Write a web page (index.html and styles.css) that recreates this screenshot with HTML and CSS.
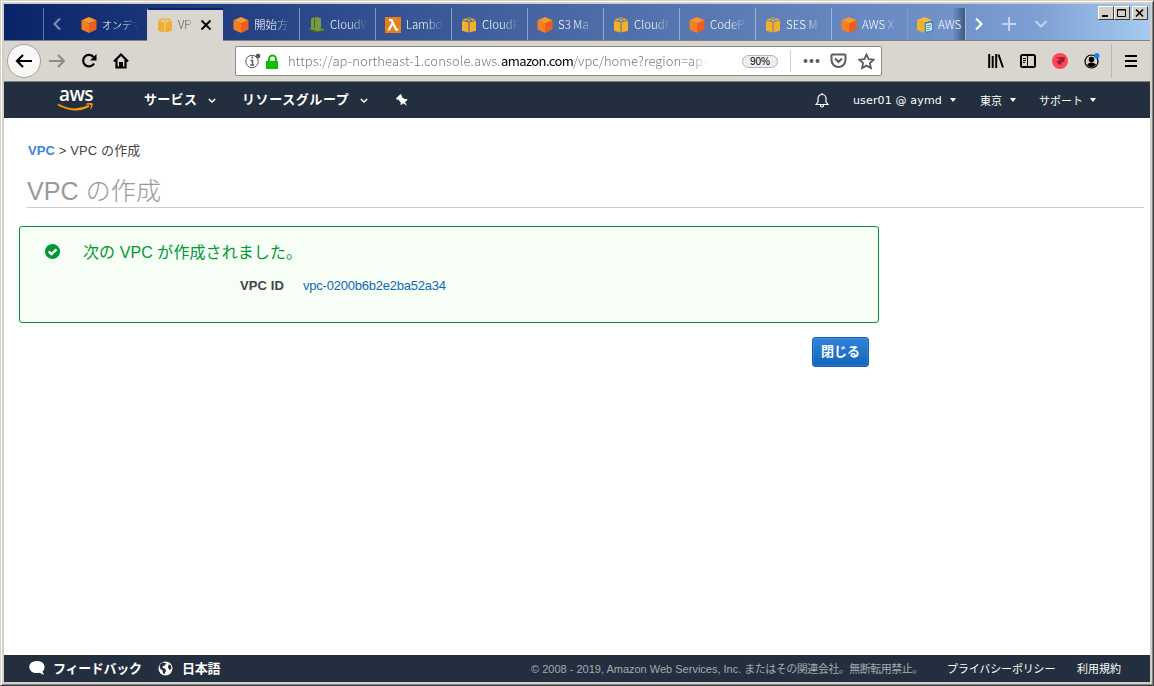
FILE: index.html
```html
<!doctype html>
<html lang="ja">
  <head>
    <meta charset="utf-8">
    <title>VPC の作成</title>
    <link rel="stylesheet" href="styles.css">
  </head>
  <body>
    <svg class="defs" width="0" height="0">
      <symbol id="cube" viewBox="0 0 16 16">
        <path fill="#f9962a" d="M8 0l7.5 3.2L8 6.5.5 3.2z"/>
        <path fill="#f57f23" d="M.5 3.2L8 6.5V16L.5 12.6z"/>
        <path fill="#ee5e1f" d="M15.5 3.2L8 6.5V16l7.5-3.4z"/>
      </symbol>
      <symbol id="box" viewBox="0 0 16 16">
        <path fill="#f0b02d" d="M1 3.8l6.5 1.4v10.3L1 13.7zM15 3.8L8.5 5.2v10.3l6.5-1.8zM1 3L4.2 1.4l3 .2L5 3.8zM15 3l-3.2-1.6-3 .2L11 3.8zM5.7 1.1L8 .5l2.3.6L8 1.5zM6 4L8 2l2 2-2 .6z"/>
      </symbol>
    </svg>
    <div class="window">
      <div class="tabs">
        <div class="tabs-start"></div>
        <div class="scroll-left"><svg width="10" height="14" viewBox="0 0 10 14"><path d="M8 1.5L2.500 7 8 12.500"/></svg></div>
        <div class="tab first"><svg class="fav"><use href="#cube"/></svg><span>オンデマ</span></div>
        <div class="tab active"><svg class="fav"><use href="#box"/></svg><span>VP</span><svg class="close" width="12" height="12" viewBox="0 0 12 12"><path d="M1.500 1.500l9 9m0-9l-9 9"/></svg></div>
        <div class="tab"><svg class="fav"><use href="#cube"/></svg><span>開始方</span></div>
        <div class="tab"><svg class="fav" viewBox="0 0 16 16"><path fill="#759c3e" d="M2 2l3-2v10l-3 2zM5 1l2-1 5 1v10H5zM0 11.500l5-1.500 11 2.500L8 15z"/><path fill="#4b612c" d="M5 2.500L6 1v9l-1 1.500zM0 11.500L8 14v2l-8-3zM8 14.500l8-2v1.200L8 16z"/></svg><span>CloudW</span></div>
        <div class="tab"><svg class="fav" viewBox="0 0 16 16"><path fill="#e8801a" d="M0 0h16v16H0z"/><path fill="none" stroke="#fff" stroke-width="2.200" d="M4 3.200h2.600l4.600 9.500h2M7.500 6.500L3.500 13.500"/></svg><span>Lambd</span></div>
        <div class="tab"><svg class="fav"><use href="#box"/></svg><span>CloudF</span></div>
        <div class="tab"><svg class="fav"><use href="#cube"/></svg><span>S3 Ma</span></div>
        <div class="tab"><svg class="fav"><use href="#box"/></svg><span>CloudF</span></div>
        <div class="tab"><svg class="fav"><use href="#cube"/></svg><span>CodeP</span></div>
        <div class="tab"><svg class="fav"><use href="#box"/></svg><span>SES M</span></div>
        <div class="tab"><svg class="fav"><use href="#cube"/></svg><span>AWS X</span></div>
        <div class="tab last"><svg class="fav" viewBox="0 0 16 16"><path fill="#f3b940" d="M0 3l7-3 8 3-7 3z"/><path fill="#f0b02d" d="M0 3l8 3v10l-8-3z"/><path fill="#d68a20" d="M8 6l7-3v10l-7 3z"/><path fill="#f4fbff" stroke="#2e86c0" stroke-width="1.400" d="M8.500 6l7-1v9l-7 1.500z"/><path stroke="#2e86c0" d="M10 8.500l4-.6M10 10.500l4-.6M10 12.600l3-.4"/></svg><span>AWS</span></div>
        <div class="tab-tools">
          <svg width="10" height="14" viewBox="0 0 10 14"><path class="bright" d="M2 1.500L7.500 7 2 12.500"/></svg>
          <svg width="16" height="16" viewBox="0 0 16 16"><path d="M8 1v14M1 8h14"/></svg>
          <svg width="14" height="10" viewBox="0 0 14 10"><path d="M1.500 2L7 7.500 12.500 2"/></svg>
        </div>
        <div class="win-buttons">
          <i><svg width="12" height="10"><path d="M2 8h6"/></svg></i>
          <i><svg width="12" height="10"><path class="thin" d="M1.500 1.500h8v7h-8zM1.500 2h8"/></svg></i>
          <i><svg width="12" height="10"><path class="cross" d="M2 1.500l7 7m0-7l-7 7"/></svg></i>
        </div>
      </div>

      <div class="toolbar">
        <div class="back"><svg width="18" height="16" viewBox="0 0 18 16"><path d="M17 8H2M8 2L2 8l6 6"/></svg></div>
        <svg class="forward" width="16" height="16" viewBox="0 0 16 16"><path d="M0 8h14M9 2l6 6-6 6"/></svg>
        <svg class="reload" width="16" height="16" viewBox="0 0 16 16"><path d="M13 10.500A5.800 5.800 0 1 1 12.500 4"/><path class="solid" d="M15.500 1v6.500H9z"/></svg>
        <svg class="home" width="16" height="16" viewBox="0 0 16 16"><path d="M1 8.500L8 1.500l7 7M3.500 7v7.500h9V7"/><path class="solid" d="M6 9h4v6H6z"/></svg>
        <div class="urlbar">
          <svg class="info" width="16" height="16" viewBox="0 0 16 16"><circle cx="7" cy="8.500" r="6.200"/><path d="M5.500 7.500h2v4M5.200 12h4" stroke-width="1.400"/><path d="M6.500 4.500h1.500" stroke-width="2"/><circle cx="13" cy="3" r="2" fill="#555"/></svg>
          <svg class="lock" width="13" height="15" viewBox="0 0 13 15"><path fill="#12bc00" d="M0 7h2V5a4.500 4.500 0 0 1 9 0v2h1v8H0zM4 7h5V5a2.500 2.500 0 0 0-5 0z"/></svg>
          <div class="url"><span class="sub">https://ap-northeast-1.console.aws.</span><b>amazon.com</b><span class="path">/vpc/home?region=ap-</span></div>
          <div class="zoom">90%</div>
          <svg class="dots" width="17" height="6" viewBox="0 0 17 6"><circle cx="2.500" cy="3" r="2"/><circle cx="8.500" cy="3" r="2"/><circle cx="14.500" cy="3" r="2"/></svg>
          <svg class="pocket" width="17" height="16" viewBox="0 0 17 16"><path d="M2.500 1.500h12a1 1 0 0 1 1 1v4.500a7 7 0 0 1-14 0V2.500a1 1 0 0 1 1-1zM5 5.500L8.500 9 12 5.500"/></svg>
          <svg class="star" width="17" height="17" viewBox="0 0 17 17"><path d="M8.500 1.500l2.100 4.600 5 .6-3.700 3.400 1 5-4.400-2.500-4.400 2.500 1-5L1.400 6.700l5-.6z"/></svg>
        </div>
        <div class="tools">
          <svg width="16" height="16" viewBox="0 0 16 16"><path d="M1.200 1v14M4.700 3v12M8.200 1v14M10.500 1.500l4.500 13"/></svg>
          <svg width="16" height="16" viewBox="0 0 16 16"><rect x="1" y="2" width="14" height="12" rx="1.500"/><path class="thin" d="M7.500 2v12M3 5.500h3M3 7.500h3M3 9.500h2"/></svg>
          <svg width="16" height="16" viewBox="0 0 16 16"><circle class="red" cx="8" cy="8" r="8"/><path fill="#a11b32" stroke="none" d="M3.500 4.500L13 4l-1 5.500-1.500-1L8 13l-.8-2-2 .8.800-2-2-.8L8 6.500z"/></svg>
          <svg width="16" height="16" viewBox="0 0 16 16"><circle cx="7.500" cy="8.500" r="6.500" stroke-width="1.200"/><circle cx="7.500" cy="6.500" r="2.800" fill="#000" stroke="none"/><path fill="#000" stroke="none" d="M3 12Q4 9.500 7.500 9.500T12 12q-4.500 4.500-9 0z"/><circle class="blue" cx="12.800" cy="2.800" r="2.700"/></svg>
          <svg class="menu" width="15" height="16" viewBox="0 0 15 16"><path d="M1 3h12M1 8h12M1 13h12"/></svg>
        </div>
      </div>

      <header class="nav">
        <div class="logo">aws<svg width="37" height="9" viewBox="0 0 37 9"><path fill="none" stroke="#f90" stroke-width="2" d="M1 1.500q16 9 31 1.500"/><path fill="#f90" d="M29 .8q4-1.500 6.800-.3Q36 4 33 7.500 34 4 34 2q-2-.7-5-.3z"/></svg></div>
        <span class="service">サービス</span>
        <svg class="chev" width="8" height="6" viewBox="0 0 8 6"><path d="M.8 1L4 4l3.200-3"/></svg>
        <span class="groups">リソースグループ</span>
        <svg class="chev" width="8" height="6" viewBox="0 0 8 6"><path d="M.8 1L4 4l3.200-3"/></svg>
        <svg class="pin" width="12" height="12" viewBox="0 0 12 12"><path fill="#fff" d="M4.500 0L6 2l-.2 1L9 5.200l1.700-.4.8 1L9 8.200l2 3.500-4-2.500L5.500 11l-1-.5.300-1.800L2.500 5.800H1L0 4.500z"/></svg>
        <div class="account">
          <svg width="14" height="15" viewBox="0 0 14 15"><path fill="none" stroke="#fff" stroke-width="1.200" d="M1 11.500L3 9V5.500a4 4 0 0 1 8 0V9l2 2.500zM7 0v2M5.500 12q0 2 1.500 2t1.500-2"/></svg>
          <span class="user">user01 @ aymd</span><i></i>
          <span class="region">東京</span><i></i>
          <span class="support">サポート</span><i></i>
        </div>
      </header>

      <main>
        <p class="crumb"><a href="#">VPC</a> &gt; VPC の作成</p>
        <h1>VPC の作成</h1>
        <section class="success">
          <svg width="15" height="15" viewBox="0 0 15 15"><circle cx="7.500" cy="7.500" r="7.500" fill="#093"/><path fill="none" stroke="#fff" stroke-width="2.400" d="M3.700 7.300l2.800 2.800 5-4.800"/></svg>
          <div class="message">
            <h2>次の VPC が作成されました。</h2>
            <div class="field"><b>VPC ID</b><a href="#">vpc-0200b6b2e2ba52a34</a></div>
          </div>
        </section>
        <div class="actions"><button>閉じる</button></div>
      </main>

      <footer>
        <svg width="16" height="15" viewBox="0 0 16 15"><path fill="#fff" d="M8 0c4.500 0 7.500 2.300 7.500 6 0 2-.8 3.500-2 4.500L15 14l-4.500-2.200C5 13 .3 10.500.3 6 .3 2.300 3.500 0 8 0z"/></svg>
        <span class="feedback">フィードバック</span>
        <svg width="15" height="15" viewBox="0 0 15 15"><circle cx="7.500" cy="7.500" r="7" fill="#fff"/><path fill="#232f3e" d="M1.500 4l3-2.500L8 2 7 4.500l-2 .5-.5 2 2.500.5 1 2L6.500 13 5 12.500 4.500 9.500 2 7.500zM10.500 3.500l2.500 1 .5 3-2 1.500-1.500-2.500z"/></svg>
        <span class="lang">日本語</span>
        <span class="copy">© 2008 - 2019, Amazon Web Services, Inc. <span>またはその関連会社。無断転用禁止。</span></span>
        <span class="privacy">プライバシーポリシー</span>
        <span class="terms">利用規約</span>
      </footer>
    </div>
  </body>
</html>
```
FILE: styles.css
```css
* {
  box-sizing: border-box;
}

body {
  margin: 0;
  font-family: "Liberation Sans", "Noto Sans CJK JP", sans-serif;
  font-size: 13px;
  color: #444;
}

svg {
  display: block;
  flex: none;
}

.defs {
  position: absolute;
}

.window {
  display: flex;
  flex-direction: column;
  width: 1154px;
  height: 686px;
  border: 1px solid;
  border-color: #d4d0c8 #404040 #404040 #d4d0c8;
  box-shadow: inset 1px 1px #fff, inset -1px -1px #808080;
  padding: 3px;
  background: #d4d0c8;
  overflow: hidden;
}

/* tab strip */
.tabs {
  position: relative;
  display: flex;
  height: 37px;
  padding-top: 4px;
  border-bottom: 1px solid #808080;
  background: linear-gradient(90deg, #0a246a, #2d4b8b 28%, #5272ad 56%, #6d8fc6 80%, #7d9fd3 90%, #a6caf0);
}

.tabs-start {
  width: 40px;
  border-right: 1px solid #5f73a3;
}

.scroll-left {
  width: 27px;
  padding: 9px 0 0 8px;
}

.scroll-left path,
.tab-tools path {
  fill: none;
  stroke: #8592b4;
  stroke-width: 2;
}

.tab {
  display: flex;
  flex: none;
  width: 76px;
  padding: 9px 0 0 9px;
  border-left: 1px solid rgba(255, 255, 255, .4);
  color: #fff;
  font-size: 12px;
  line-height: 15px;
}

.tab.first,
.tab.active + .tab {
  border-left-color: transparent;
}

.tab span {
  width: 40px;
  margin-left: 5px;
  white-space: nowrap;
  font-family: "Noto Sans CJK JP", sans-serif;
  font-size: 11.5px;
  font-weight: 300;
  -webkit-mask-image: linear-gradient(90deg, #000 50%, transparent 92%);
  mask-image: linear-gradient(90deg, #000 50%, transparent 92%);
}

.tab.first span {
  font-size: 10px;
}

.fav {
  width: 16px;
  height: 16px;
}

.tab.active {
  height: 33px;
  padding: 7px 0 0 9px;
  border-top: 2px solid #0a246a;
  border-left-color: #d4d0c8;
  background: #d9d6cf;
  color: #555;
}

.tab.active span {
  width: 17px;
}

.close {
  margin: 2px 0 0 5px;
  stroke: #000;
  stroke-width: 2;
}

.tab.last {
  width: 58px;
  background: linear-gradient(90deg, transparent 78%, #3f5680);
}

.tab.last span {
  width: 27px;
  -webkit-mask-image: none;
  mask-image: none;
}

.tab-tools {
  display: flex;
  align-items: center;
  gap: 17px;
  padding-left: 8px;
  border-left: 1px solid #a9bddf;
}

.tab-tools path {
  stroke: #c5d1e8;
}

.tab-tools .bright {
  stroke: #fff;
}

.win-buttons {
  position: absolute;
  top: 2px;
  right: 2px;
  display: flex;
}

.win-buttons i {
  width: 16px;
  height: 14px;
  padding: 1px;
  border: 1px solid;
  border-color: #fff #404040 #404040 #fff;
  background: #d4d0c8;
}

.win-buttons i:last-child {
  margin-left: 2px;
}

.win-buttons path {
  fill: none;
  stroke: #000;
  stroke-width: 2;
}

.win-buttons .thin {
  stroke-width: 1;
}

.win-buttons .cross {
  stroke-width: 1.6;
}

/* navigation toolbar */
.toolbar {
  display: flex;
  align-items: center;
  height: 41px;
  border-bottom: 1px solid #808080;
  background: #d9d6cf;
}

.toolbar > svg path,
.back path {
  fill: none;
  stroke: #000;
  stroke-width: 2.2;
}

.back {
  width: 34px;
  height: 34px;
  margin-left: 3px;
  padding: 8px 0 0 7px;
  border: 1px solid #a5a39e;
  border-radius: 50%;
  background: #f8f8f6;
}

.toolbar .forward {
  margin-left: 8px;
}

.toolbar .forward path {
  stroke: #8c8a86;
}

.reload,
.home {
  margin-left: 16px;
}

.toolbar .solid {
  fill: #000;
  stroke: none;
}

.urlbar {
  display: flex;
  align-items: center;
  width: 647px;
  height: 30px;
  margin-left: 106px;
  padding-left: 9px;
  border: 1px solid #8a8a88;
  border-radius: 2px;
  background: #fff;
}

.info,
.pocket,
.star {
  fill: none;
  stroke: #5c5c5c;
  stroke-width: 2;
}

.info {
  stroke-width: 1;
}

.lock {
  margin-left: 5px;
}

.url {
  display: flex;
  width: 420px;
  margin-left: 9px;
  white-space: nowrap;
  font-family: "Noto Sans CJK JP", sans-serif;
  font-size: 13px;
  font-weight: 300;
  line-height: 20px;
  color: #777;
  -webkit-mask-image: linear-gradient(90deg, #000 96%, transparent);
  mask-image: linear-gradient(90deg, #000 96%, transparent);
}

.url .sub {
  width: 213px;
  letter-spacing: .12px;
}

.url b {
  width: 72px;
  color: #000;
  font-weight: 400;
  letter-spacing: -.6px;
}

.zoom {
  width: 36px;
  height: 13px;
  margin-left: 34px;
  border: 1px solid #b5b5b5;
  border-radius: 7px;
  background: #eee;
  color: #000;
  font-size: 10px;
  line-height: 11px;
  text-align: center;
}

/* divider between the zoom badge and the page actions */
.zoom + .dots {
  width: 30px;
  height: 22px;
  margin-left: 12px;
  padding-left: 12px;
  border-left: 1px solid #d5d0c8;
  fill: #5c5c5c;
}

.pocket {
  margin-left: 10px;
}

.star {
  margin-left: 11px;
  stroke-width: 1.8;
}

.tools {
  display: flex;
  align-items: center;
  gap: 16px;
  height: 34px;
  margin-left: 106px;
  fill: none;
  stroke: #000;
  stroke-width: 2;
}

.tools .thin {
  stroke-width: 1;
}

.tools .red {
  fill: #ff4655;
  stroke: none;
}

.tools .blue {
  fill: #0a84ff;
  stroke: none;
}

.tools .menu {
  width: 28px;
  height: 34px;
  margin-left: -5px;
  padding-left: 12px;
  border-left: 1px solid #b9b6b0;
}

/* console header */
.nav {
  display: flex;
  align-items: center;
  height: 36px;
  background: #232f3e;
  color: #fff;
  font-family: "Noto Sans CJK JP", sans-serif;
  font-size: 13px;
  font-weight: 700;
  white-space: nowrap;
}

.logo {
  width: 38px;
  height: 29px;
  margin-left: 53px;
  font-family: "Open Sans", sans-serif;
  font-size: 19px;
  font-weight: 600;
  line-height: 17px;
  letter-spacing: -.6px;
  text-align: center;
}

.service {
  width: 54px;
  margin: 0 0 4px 49px;
  letter-spacing: .3px;
}

.groups {
  width: 108px;
  margin: 0 0 4px 26px;
  letter-spacing: .6px;
}

.chev {
  margin: 2px 0 0 10px;
  fill: none;
  stroke: #fff;
  stroke-width: 1.5;
}

.pin {
  margin-left: 28px;
}

.account {
  display: flex;
  align-items: center;
  margin-left: 407px;
  font-size: 11px;
  font-weight: 400;
}

.user {
  width: 90px;
  margin: 1px 0 0 24px;
  font-family: "DejaVu Sans", sans-serif;
  letter-spacing: .15px;
}

.account i {
  margin-left: 7px;
  border: 3.5px solid transparent;
  border-top: 4px solid #fff;
  border-bottom: 0;
}

.region {
  width: 23px;
  margin-left: 24px;
}

.support {
  width: 44px;
  margin-left: 23px;
}

/* page */
main {
  flex: 1;
  padding: 22px 6px 0 15px;
  background: #fff;
}

.crumb {
  margin: 0 0 0 9px;
  line-height: 21px;
  letter-spacing: .12px;
}

a {
  color: #1166bb;
  text-decoration: none;
}

.crumb a {
  color: #3b86dc;
  font-weight: bold;
}

h1 {
  height: 38px;
  margin: 9px 0 18px 8px;
  border-bottom: 1px solid #ccc;
  color: #999;
  font-size: 25px;
  font-weight: 300;
  line-height: 43px;
  letter-spacing: .1px;
}

.success {
  display: flex;
  width: 860px;
  height: 97px;
  padding: 17px 0 0 25px;
  border: 1px solid #093;
  border-radius: 3px;
  background: #f6fef6;
}

.message {
  margin-left: 23px;
}

h2 {
  margin: -3px 0 0;
  color: #093;
  font-size: 16px;
  font-weight: 400;
  line-height: 24px;
  letter-spacing: .08px;
}

.field {
  display: flex;
  margin-top: 11px;
  line-height: 20px;
}

.field b {
  width: 63px;
  margin-left: 157px;
  letter-spacing: .1px;
}

.field a {
  letter-spacing: -.22px;
}

.actions {
  display: flex;
  justify-content: flex-end;
  width: 850px;
  margin-top: 14px;
}

button {
  width: 57px;
  height: 30px;
  padding: 0 0 2px;
  border: 1px solid #1360b0;
  border-radius: 3px;
  background: linear-gradient(#2f84d8, #1266bd);
  box-shadow: inset 0 0 0 1px rgba(255, 255, 255, .12);
  color: #fff;
  font-family: "Noto Sans CJK JP", sans-serif;
  font-size: 13px;
  font-weight: 700;
  line-height: 26px;
}

footer {
  display: flex;
  align-items: center;
  height: 27px;
  padding: 0 0 1px 25px;
  background: #232f3e;
  color: #fff;
  font-family: "Liberation Sans", "Noto Sans CJK JP", sans-serif;
  font-size: 11px;
  white-space: nowrap;
}

footer svg {
  margin-top: 1px;
}

.feedback,
.lang {
  font-size: 13px;
  font-weight: 700;
}

.feedback {
  width: 88px;
  margin: 0 0 1px 8px;
  letter-spacing: -.3px;
}

.lang {
  width: 40px;
  margin: 0 0 1px 9px;
  letter-spacing: -.3px;
}

.feedback + svg {
  margin-left: 17px;
}

.copy {
  width: 394px;
  margin-left: 309px;
  color: #a5abb0;
}

.copy span {
  letter-spacing: -.5px;
}

.privacy {
  width: 109px;
  margin-left: 22px;
  letter-spacing: -.15px;
}

.terms {
  margin-left: 21px;
}
```
